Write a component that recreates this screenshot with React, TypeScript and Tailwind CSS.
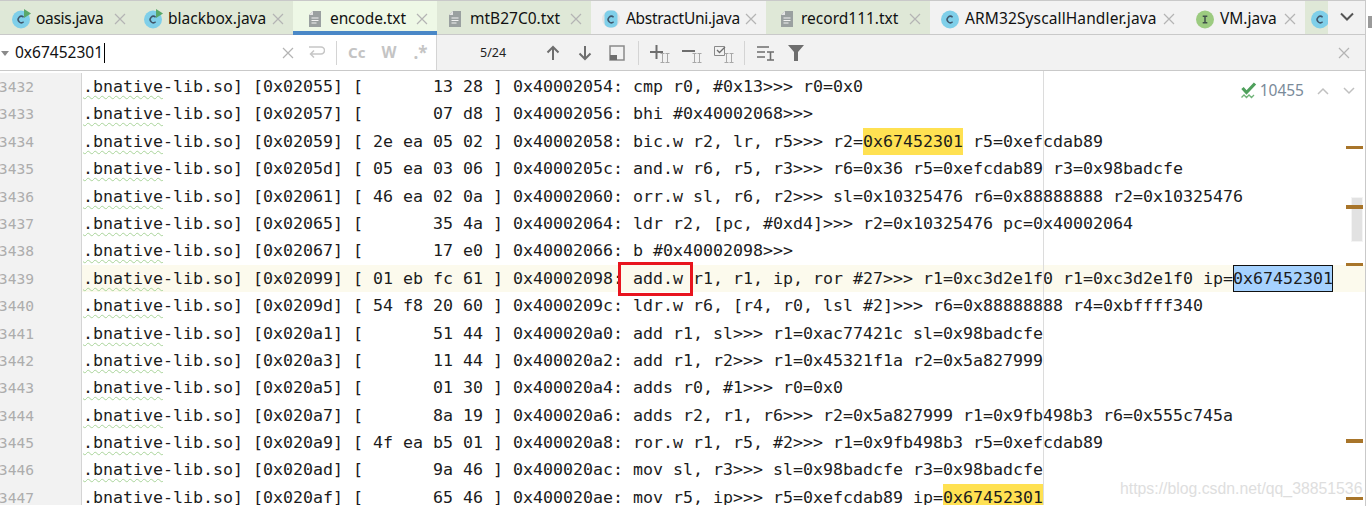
const MONO = 'font-["DejaVu_Sans_Mono",monospace]';
const NEEDLE = '0x67452301';

const LINES = [
  ['3432', '.bnative', '-lib.so] [0x02055] [       13 28 ] 0x40002054: cmp r0, #0x13>>> r0=0x0'],
  ['3433', '.bnative', '-lib.so] [0x02057] [       07 d8 ] 0x40002056: bhi #0x40002068>>>'],
  ['3434', '.bnative', '-lib.so] [0x02059] [ 2e ea 05 02 ] 0x40002058: bic.w r2, lr, r5>>> r2=0x67452301 r5=0xefcdab89'],
  ['3435', '.bnative', '-lib.so] [0x0205d] [ 05 ea 03 06 ] 0x4000205c: and.w r6, r5, r3>>> r6=0x36 r5=0xefcdab89 r3=0x98badcfe'],
  ['3436', '.bnative', '-lib.so] [0x02061] [ 46 ea 02 0a ] 0x40002060: orr.w sl, r6, r2>>> sl=0x10325476 r6=0x88888888 r2=0x10325476'],
  ['3437', '.bnative', '-lib.so] [0x02065] [       35 4a ] 0x40002064: ldr r2, [pc, #0xd4]>>> r2=0x10325476 pc=0x40002064'],
  ['3438', '.bnative', '-lib.so] [0x02067] [       17 e0 ] 0x40002066: b #0x40002098>>>'],
  ['3439', '.bnative', '-lib.so] [0x02099] [ 01 eb fc 61 ] 0x40002098: add.w r1, r1, ip, ror #27>>> r1=0xc3d2e1f0 r1=0xc3d2e1f0 ip=0x67452301'],
  ['3440', '.bnative', '-lib.so] [0x0209d] [ 54 f8 20 60 ] 0x4000209c: ldr.w r6, [r4, r0, lsl #2]>>> r6=0x88888888 r4=0xbffff340'],
  ['3441', '.bnative', '-lib.so] [0x020a1] [       51 44 ] 0x400020a0: add r1, sl>>> r1=0xac77421c sl=0x98badcfe'],
  ['3442', '.bnative', '-lib.so] [0x020a3] [       11 44 ] 0x400020a2: add r1, r2>>> r1=0x45321f1a r2=0x5a827999'],
  ['3443', '.bnative', '-lib.so] [0x020a5] [       01 30 ] 0x400020a4: adds r0, #1>>> r0=0x0'],
  ['3444', '.bnative', '-lib.so] [0x020a7] [       8a 19 ] 0x400020a6: adds r2, r1, r6>>> r2=0x5a827999 r1=0x9fb498b3 r6=0x555c745a'],
  ['3445', '.bnative', '-lib.so] [0x020a9] [ 4f ea b5 01 ] 0x400020a8: ror.w r1, r5, #2>>> r1=0x9fb498b3 r5=0xefcdab89'],
  ['3446', '.bnative', '-lib.so] [0x020ad] [       9a 46 ] 0x400020ac: mov sl, r3>>> sl=0x98badcfe r3=0x98badcfe'],
  ['3447', '.bnative', '-lib.so] [0x020af] [       65 46 ] 0x400020ae: mov r5, ip>>> r5=0xefcdab89 ip=0x67452301'],
];

function ClassIcon({ letter = 'C', fill = '#7fcfe9', run = false, abstract = false }: { letter?: string; fill?: string; run?: boolean; abstract?: boolean }) {
  return (
    <svg width="20" height="20" viewBox="0 0 20 20" className="shrink-0">
      {abstract ? (
        <>
          <circle cx="10" cy="10" r="9" fill="#e4e4e4" />
          <rect x="3.5" y="1.5" width="13" height="17" rx="5" fill={fill} />
        </>
      ) : (
        <circle cx="10" cy="10.5" r="9" fill={fill} />
      )}
      {letter === 'C' ? (
        <path d="M12.6 8.2a3.2 3.2 0 1 0 0 4.6" fill="none" stroke="#40566a" strokeWidth="1.5" />
      ) : (
        <path d="M7.7 7.2h4.6M7.7 13.8h4.6M10 7.2v6.6" fill="none" stroke="#40504a" strokeWidth="1.5" />
      )}
      {run && <path d="M13 0l7 4.5-7 4.5z" fill="#59a869" />}
    </svg>
  );
}

function TextIcon() {
  return (
    <svg width="14" height="18" viewBox="0 0 14 18" className="shrink-0">
      <path d="M1 5l4-4h8v16H1z" fill="#9aa0a0" />
      <path d="M1 5l4-4v4z" fill="#e6e6e6" />
      <path d="M3.5 8h7M3.5 10.5h7M3.5 13h5" stroke="#f2f2f2" strokeWidth="1.1" />
    </svg>
  );
}

function CloseX({ size = 12, color = '#b4b4b4' }: { size?: number; color?: string }) {
  return (
    <svg width={size} height={size} viewBox="0 0 12 12" className="shrink-0">
      <path d="M1 1l10 10M11 1L1 11" stroke={color} strokeWidth="1.2" />
    </svg>
  );
}

function Tab({ name, width, bg, pl, gap, icon, tracking = '', active = false }: { name: string; width: string; bg: string; pl: string; gap: string; icon: React.ReactNode; tracking?: string; active?: boolean }) {
  return (
    <div className={`relative flex h-[33px] shrink-0 items-center pt-[2px] ${width} ${bg} ${pl}`}>
      {icon}
      <span className={`${gap} ${tracking} whitespace-pre text-[15.5px] text-[#111]`}>{name}</span>
      <span className="ml-auto mr-[9px]">
        <CloseX />
      </span>
      {active && <div className="absolute inset-x-0 bottom-[-1px] h-[4px] bg-[#4a88c7]" />}
    </div>
  );
}

function TabBar() {
  const green = 'bg-[#dfe8d7]';
  const gray = 'bg-[#f2f2f2]';
  return (
    <div className="flex h-[35px] border-t border-b border-[#c9c9c9] bg-[#f2f2f2]">
      <Tab name="oasis.java" tracking="tracking-[-0.3px]" width="w-[135px]" bg={green} pl="pl-[11px]" gap="ml-[5px]" icon={<ClassIcon run />} />
      <Tab name="blackbox.java" width="w-[158px]" bg={green} pl="pl-[8px]" gap="ml-[5px]" icon={<ClassIcon run />} />
      <Tab name="encode.txt" tracking="tracking-[-0.1px]" width="w-[144px]" bg="bg-[#eef8e6]" pl="pl-[15px]" gap="ml-[8px]" icon={<TextIcon />} active />
      <Tab name="mtB27C0.txt" width="w-[154px]" bg={green} pl="pl-[11px]" gap="ml-[8px]" icon={<TextIcon />} />
      <Tab name="AbstractUni.java" tracking="tracking-[-0.3px]" width="w-[175px]" bg={gray} pl="pl-[10px]" gap="ml-[5px]" icon={<ClassIcon abstract />} />
      <Tab name="record111.txt" width="w-[164px]" bg={green} pl="pl-[14px]" gap="ml-[7px]" icon={<TextIcon />} />
      <Tab name="ARM32SyscallHandler.java" tracking="tracking-[0.12px]" width="w-[254px]" bg={gray} pl="pl-[10px]" gap="ml-[5px]" icon={<ClassIcon />} />
      <Tab name="VM.java" width="w-[121px]" bg={gray} pl="pl-[11px]" gap="ml-[5px]" icon={<ClassIcon letter="I" fill="#9ccb80" />} />
      <div className="flex h-[33px] w-[23px] shrink-0 items-center overflow-hidden bg-[#dfe8d7] pl-[5px] pt-[2px]">
        <ClassIcon />
      </div>
      <div className="flex flex-1 items-center justify-center pb-[3px]">
        <svg width="14" height="9" viewBox="0 0 14 9">
          <path d="M1 1.5l6 6 6-6" fill="none" stroke="#555" strokeWidth="2" />
        </svg>
      </div>
    </div>
  );
}

function MiniII({ children }: { children: React.ReactNode }) {
  return (
    <svg width="22" height="22" viewBox="0 0 22 22" className="shrink-0">
      {children}
      <path d="M10.5 11.5h4M10.5 20.5h4M12.5 11.5v9M15.5 11.5h4M15.5 20.5h4M17.5 11.5v9" stroke="#a8a8a8" strokeWidth="1" fill="none" />
    </svg>
  );
}

function FindBar() {
  const ink = '#6e6e6e';
  return (
    <div className="flex h-[36px] border-b border-[#c9c9c9] bg-[#f2f2f2]">
      <div className="flex w-[437px] shrink-0 items-center border-r border-[#d4d4d4] bg-white">
        <svg width="8" height="6" viewBox="0 0 8 6" className="ml-[1px] mt-[2px] shrink-0">
          <path d="M0 0h8L4 5z" fill="#8a8a8a" />
        </svg>
        <span className="ml-[6px] text-[15.5px] text-[#111]">{NEEDLE}</span>
        <span className="ml-[1px] h-[20px] w-[1px] bg-black" />
        <div className="ml-[177px]">
          <CloseX />
        </div>
        <svg width="18" height="15" viewBox="0 0 18 15" className="ml-[13px] shrink-0">
          <path d="M2 2h12a2.5 2.5 0 0 1 0 7H4M7 5.5L3.5 9 7 12.5" fill="none" stroke="#c6c6c6" strokeWidth="1.5" />
        </svg>
        <span className="ml-[11px] h-[24px] w-[1px] bg-[#d4d4d4]" />
        <span className="ml-[11px] text-[15px] font-bold text-[#c4c4c4]">Cc</span>
        <span className="ml-[16px] text-[15.5px] font-bold text-[#c4c4c4]">W</span>
        <span className="ml-[17px] text-[17px] font-bold text-[#c4c4c4]">.*</span>
      </div>
      <span className="ml-[43px] self-center pt-[1px] text-[12.5px] text-[#222]">5/24</span>
      <div className="ml-[40px] flex items-center">
        <svg width="14" height="16" viewBox="0 0 14 16" className="shrink-0">
          <path d="M7 15V2M1.5 7.5L7 2l5.5 5.5" fill="none" stroke={ink} strokeWidth="2" />
        </svg>
        <svg width="14" height="16" viewBox="0 0 14 16" className="ml-[18px] shrink-0">
          <path d="M7 1v13M1.5 8.5L7 14l5.5-5.5" fill="none" stroke={ink} strokeWidth="2" />
        </svg>
        <svg width="16" height="16" viewBox="0 0 16 16" className="ml-[17px] shrink-0">
          <path d="M1 1h14v14H1z" fill="none" stroke="#8a8a8a" strokeWidth="1.5" />
          <path d="M1 10h7v5H1z" fill="#6e6e6e" />
        </svg>
        <span className="ml-[13px] h-[24px] w-[1px] bg-[#d4d4d4]" />
        <div className="ml-[11px]">
          <MiniII>
            <path d="M0 10h13M6.5 3v14" stroke={ink} strokeWidth="2" />
          </MiniII>
        </div>
        <div className="ml-[10px]">
          <MiniII>
            <path d="M0 9h13" stroke={ink} strokeWidth="2" />
          </MiniII>
        </div>
        <div className="ml-[10px]">
          <MiniII>
            <path d="M0.5 4.5h10v9h-10z" fill="none" stroke="#8a8a8a" strokeWidth="1" />
            <path d="M3 8l2.5 2.5L11 5" fill="none" stroke={ink} strokeWidth="1.3" />
          </MiniII>
        </div>
        <span className="ml-[8px] h-[24px] w-[1px] bg-[#d4d4d4]" />
        <svg width="18" height="16" viewBox="0 0 18 16" className="ml-[12px] shrink-0">
          <path d="M0 2h12M0 7h8M0 12h8M10 7h7M10 15h7M13.5 7v8" fill="none" stroke={ink} strokeWidth="1.6" />
        </svg>
        <svg width="16" height="16" viewBox="0 0 16 16" className="ml-[13px] shrink-0">
          <path d="M0 0h16L10 7v9H6V7z" fill={ink} />
        </svg>
      </div>
      <div className="ml-auto mr-[15px] self-center">
        <CloseX />
      </div>
    </div>
  );
}

function CodeText({ text, selected }: { text: string; selected: boolean }) {
  const at = text.indexOf(NEEDLE);
  if (at < 0) return <>{text}</>;
  return (
    <>
      {text.slice(0, at)}
      <span className={selected ? 'inline-block h-[27px] bg-[#a6d2ff] leading-[27px] shadow-[inset_0_0_0_1px_#111]' : 'inline-block h-[27px] bg-[#ffe152] leading-[27px]'}>
        {NEEDLE}
      </span>
      {text.slice(at + NEEDLE.length)}
    </>
  );
}

function Row({ line, index }: { line: string[]; index: number }) {
  const current = index === 7;
  return (
    <div className={`flex h-[27.4px] ${current ? 'bg-[#fcfaed]' : 'bg-white'}`}>
      <div className={`flex w-[82px] shrink-0 justify-end overflow-hidden border-r border-[#d4d4d4] bg-[#f2f2f2] pr-[47px] ${MONO} text-[14.6px] leading-[27px] text-[#adadad]`}>
        {line[0]}
      </div>
      <div className={`ml-[1px] whitespace-pre ${MONO} text-[16.61px] leading-[27px] text-[#1c1c1c]`}>
        <span className="underline decoration-[#a9d49a] decoration-wavy decoration-1 underline-offset-[3px]">{line[1]}</span>
        <CodeText text={line[2]} selected={current} />
      </div>
    </div>
  );
}

function Editor() {
  return (
    <div className="relative h-[434px] overflow-hidden bg-white pt-[2px]">
      {LINES.map((line, i) => (
        <Row key={line[0]} line={line} index={i} />
      ))}
      {/* right margin guide */}
      <div className="absolute bottom-0 left-[1043px] top-0 w-[1px] bg-[#dcdcdc]" />
      {/* search hit on the add.w */}
      <div className="absolute left-[618px] top-[191px] h-[34px] w-[75px] border-[3px] border-[#e8141e]" />
      {/* inspection widget */}
      <div className="absolute right-[10px] top-[8px] flex items-center">
        <svg width="16" height="17" viewBox="0 0 16 17" className="shrink-0">
          <path d="M1.5 6l4 4.5 8.5-9" fill="none" stroke="#4fa05c" strokeWidth="3.2" />
          <path d="M0.5 15.5l2.5-2.5 2.5 2.5 2.5-2.5 2.5 2.5 2.5-2.5" fill="none" stroke="#6fb377" strokeWidth="1.3" />
        </svg>
        <span className="ml-[3px] font-['Noto_Sans',sans-serif] text-[15.5px] text-[#7a8a99]">10455</span>
        <svg width="12" height="8" viewBox="0 0 12 8" className="ml-[13px] shrink-0">
          <path d="M1 7l5-5 5 5" fill="none" stroke="#c0c0c0" strokeWidth="1.5" />
        </svg>
        <svg width="12" height="8" viewBox="0 0 12 8" className="ml-[14px] shrink-0">
          <path d="M1 1l5 5 5-5" fill="none" stroke="#c0c0c0" strokeWidth="1.5" />
        </svg>
      </div>
      {/* scrollbar and error stripes */}
      <div className="absolute left-[1351px] top-[126px] h-[45px] w-[12px] border border-[#f4f4f4] bg-[#e2e2e2]" />
      <div className="absolute left-[1346px] top-[75px] h-[3px] w-[17px] bg-[#a8752a]" />
      <div className="absolute left-[1346px] top-[134px] h-[4px] w-[17px] bg-[#a8752a]" />
      <div className="absolute left-[1346px] top-[192px] h-[3px] w-[17px] bg-[#a8752a]" />
      <div className="absolute left-[1346px] top-[368px] h-[4px] w-[17px] bg-[#a8752a]" />
      <div className="absolute left-[1346px] top-[426px] h-[3px] w-[17px] bg-[#a8752a]" />
      {/* blog watermark */}
      <span className="absolute left-[1120px] top-[406px] font-['Liberation_Sans',sans-serif] text-[15.8px] text-[#dedede]">
        https://blog.csdn.net/qq_38851536
      </span>
    </div>
  );
}

function SideStrip() {
  return (
    <div className="relative h-[506px] w-[7px] shrink-0 overflow-hidden border-l border-[#c9c9c9] bg-white">
      <div className="absolute left-[2px] top-[16px] h-[12px] w-[4px] bg-[#9a9a9a]" />
      <div className="absolute left-[6px] top-[36px] h-[1px] w-[1px] bg-[#c08a20]" />
      <div className="absolute left-[6px] top-[41px] h-[1px] w-[1px] bg-[#c08a20]" />
      <div className="absolute left-[6px] top-[49px] h-[3px] w-[1px] bg-[#8a2a10]" />
      <div className="absolute left-[6px] top-[58px] h-[1px] w-[1px] bg-[#c08a20]" />
      <div className="absolute left-[6px] top-[65px] h-[3px] w-[1px] bg-[#8a2a10]" />
      <div className="absolute left-[6px] top-[75px] h-[1px] w-[1px] bg-[#c08a20]" />
    </div>
  );
}

export default function App() {
  return (
    <div className="flex h-[506px] w-[1372px] overflow-hidden bg-white font-['Noto_Sans',sans-serif]">
      <div className="w-[1365px] shrink-0">
        <TabBar />
        <FindBar />
        <Editor />
      </div>
      <SideStrip />
    </div>
  );
}
